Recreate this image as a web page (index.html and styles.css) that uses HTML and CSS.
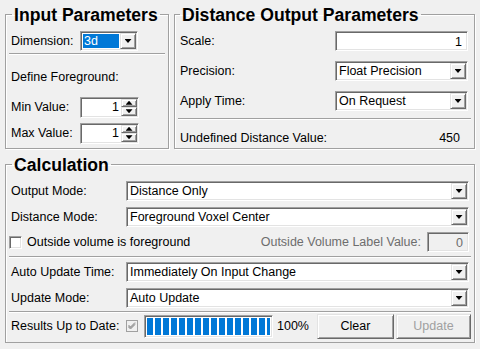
FILE: index.html
```html
<!DOCTYPE html>
<html lang="en">
<head>
  <meta charset="UTF-8">
  <title>Distance Transform</title>
  <link rel="stylesheet" href="styles.css">
</head>
<body>
  <div class="panel">
    <div class="top-row">
      <fieldset class="group input-group">
        <legend>Input Parameters</legend>
        <div class="row first">
          <span class="label short">Dimension:</span>
          <div class="combo narrow"><span class="combo-text"><span class="selected">3d</span></span><span class="drop"></span></div>
        </div>
        <div class="sep sep-dim"></div>
        <div class="row define">Define Foreground:</div>
        <div class="row min-row">
          <span class="label short">Min Value:</span>
          <div class="spin"><span class="spin-value">1</span><span class="spin-btns"><span class="spin-btn up"></span><span class="spin-btn down"></span></span></div>
        </div>
        <div class="row max-row">
          <span class="label short">Max Value:</span>
          <div class="spin"><span class="spin-value">1</span><span class="spin-btns"><span class="spin-btn up"></span><span class="spin-btn down"></span></span></div>
        </div>
      </fieldset>

      <fieldset class="group output-group">
        <legend>Distance Output Parameters</legend>
        <div class="row first">
          <span class="label grow">Scale:</span>
          <div class="edit wide-edit">1</div>
        </div>
        <div class="row spaced">
          <span class="label grow">Precision:</span>
          <div class="combo wide-edit"><span class="combo-text">Float Precision</span><span class="drop"></span></div>
        </div>
        <div class="row spaced">
          <span class="label grow">Apply Time:</span>
          <div class="combo wide-edit"><span class="combo-text">On Request</span><span class="drop"></span></div>
        </div>
        <div class="sep sep-out"></div>
        <div class="row undef">
          <span class="label grow">Undefined Distance Value:</span>
          <span class="value">450</span>
        </div>
      </fieldset>
    </div>

    <fieldset class="group calc-group">
      <legend>Calculation</legend>
      <div class="row first">
        <span class="label long">Output Mode:</span>
        <div class="combo grow"><span class="combo-text">Distance Only</span><span class="drop"></span></div>
      </div>
      <div class="row first">
        <span class="label long">Distance Mode:</span>
        <div class="combo grow"><span class="combo-text">Foreground Voxel Center</span><span class="drop"></span></div>
      </div>
      <div class="row check-row">
        <span class="checkbox"></span>
        <span class="label grow">Outside volume is foreground</span>
        <span class="label disabled">Outside Volume Label Value:</span>
        <div class="edit label-edit">0</div>
      </div>
      <div class="sep sep-a"></div>
      <div class="row auto-row">
        <span class="label long">Auto Update Time:</span>
        <div class="combo grow"><span class="combo-text">Immediately On Input Change</span><span class="drop"></span></div>
      </div>
      <div class="row first">
        <span class="label long">Update Mode:</span>
        <div class="combo grow"><span class="combo-text">Auto Update</span><span class="drop"></span></div>
      </div>
      <div class="sep sep-b"></div>
      <div class="row results-row">
        <span class="label long">Results Up to Date:</span>
        <span class="checkbox checked">
          <svg width="10" height="10" viewBox="0 0 10 10"><path d="M1.5 4 L3.5 6 L8 1.5 M1.5 5 L3.5 7 L8 2.5 M1.5 6 L3.5 8 L8 3.5" fill="none" stroke="#8c8c8c" stroke-width="1"/></svg>
        </span>
        <div class="progress"><div class="progress-fill"></div></div>
        <span class="percent">100%</span>
        <button class="btn">Clear</button>
        <button class="btn" disabled>Update</button>
      </div>
    </fieldset>
  </div>
</body>
</html>
```

FILE: styles.css
```css
body {
  margin: 0;
  background-color: #f0f0f0;
  font-family: "Liberation Sans", Arial, sans-serif;
  font-size: 12.5px;
  color: #000;
}
.panel {
  display: flex;
  flex-direction: column;
  gap: 4px;
  padding: 3px 5px 0 5px;
}
.top-row {
  display: flex;
  gap: 5px;
}
.group {
  margin: 0;
  padding: 0 5px;
  border: 1px solid #a0a0a0;
  box-shadow: 1px 1px 0 #fff, inset 1px 1px 0 #fff;
  min-width: 0;
  display: flex;
  flex-direction: column;
}
.group legend {
  font-size: 17.6px;
  font-weight: bold;
  line-height: 20px;
  padding: 2px 2px 0 2px;
  margin-left: 1px;
}
.input-group {
  box-sizing: border-box;
  width: 164px;
  flex: none;
}
.output-group {
  flex: 1;
}
.output-group legend {
  margin-left: 0;
}
.calc-group {
  padding-bottom: 3px;
}
.row {
  display: flex;
  align-items: center;
  height: 20px;
}
.first {
  margin-top: 6px;
}
.spaced {
  margin-top: 10px;
}
.label {
  white-space: nowrap;
}
.short {
  width: 69px;
}
.long {
  width: 115px;
  flex: none;
}
.grow {
  flex: 1;
}
.disabled {
  color: #6d6d6d;
  margin-right: 6px;
}
.define {
  margin-top: 12px;
}
.min-row {
  margin-top: 10px;
}
.max-row {
  margin-top: 6px;
}
.undef {
  margin-top: 7px;
  height: 21px;
}
.value {
  padding-right: 9px;
}
.sep {
  border-top: 1px solid #a0a0a0;
  border-bottom: 1px solid #fff;
  margin-left: -2px;
  margin-right: -2px;
}
.sep-dim {
  margin-top: 2px;
}
.sep-out {
  margin-top: 7px;
}
.sep-a {
  margin-top: 4px;
}
.sep-b {
  margin-top: 3px;
}
.check-row {
  margin-top: 5px;
}
.auto-row {
  margin-top: 4px;
}
.results-row {
  height: 26px;
  margin-right: -2px;
}

/* sunken boxes */
.edit, .combo, .spin, .progress, .checkbox {
  box-sizing: border-box;
  border: 1px solid;
  border-color: #a0a0a0 #fff #fff #a0a0a0;
  box-shadow: inset 1px 1px 0 #696969, inset -1px -1px 0 #e3e3e3;
  background-color: #fff;
}
.edit {
  height: 20px;
  text-align: right;
  padding: 3px 5px 0 0;
}
.wide-edit {
  width: 133px;
  margin-right: 1px;
}
.label-edit {
  width: 42px;
  color: #6d6d6d;
  background-color: #f0f0f0;
}
.combo {
  display: flex;
  height: 20px;
  padding: 1px;
}
.combo-text {
  flex: 1;
  padding-left: 2px;
  line-height: 16px;
  white-space: nowrap;
  overflow: hidden;
}
.narrow {
  width: 58px;
}
.narrow .combo-text {
  padding: 1px;
  line-height: 14px;
}
.selected {
  display: block;
  background-color: #0078d7;
  color: #fff;
  padding-left: 1px;
}
.drop, .spin-btn, .btn {
  box-sizing: border-box;
  border: 1px solid;
  border-color: #e3e3e3 #696969 #696969 #e3e3e3;
  box-shadow: inset 1px 1px 0 #fff, inset -1px -1px 0 #a0a0a0;
  background-color: #f0f0f0;
}
.drop {
  width: 16px;
  display: flex;
  align-items: center;
  justify-content: center;
}
.drop::after {
  content: "";
  width: 7px;
  height: 4px;
  background-color: #000;
  clip-path: polygon(0 0, 100% 0, 50% 100%);
}
.spin {
  display: flex;
  width: 59px;
  height: 21px;
  padding: 1px;
}
.spin-value {
  flex: 1;
  text-align: right;
  padding-right: 2px;
  line-height: 17px;
}
.spin-btns {
  display: flex;
  flex-direction: column;
  width: 16px;
}
.spin-btn {
  flex: 1;
  display: flex;
  align-items: center;
  justify-content: center;
}
.spin-btn::after {
  content: "";
  width: 7px;
  height: 4px;
  background-color: #000;
}
.up::after {
  clip-path: polygon(50% 0, 100% 100%, 0 100%);
}
.down::after {
  clip-path: polygon(0 0, 100% 0, 50% 100%);
}
.checkbox {
  width: 13px;
  height: 13px;
  flex: none;
}
.check-row .checkbox {
  margin-left: -2px;
  margin-right: 5px;
}
.checked {
  display: flex;
  align-items: center;
  justify-content: center;
  width: 12px;
  height: 12px;
  background-color: #f0f0f0;
  box-shadow: none;
  border-color: #a0a0a0;
  margin-right: 6px;
}
.progress {
  width: 129px;
  height: 23px;
  padding: 2px;
  background-color: #fff;
}
.progress-fill {
  height: 100%;
  background: repeating-linear-gradient(90deg, #0078d7 0 6px, transparent 6px 8px);
}
.percent {
  margin-left: 4px;
  flex: 1;
}
.btn {
  font-family: inherit;
  font-size: 12.5px;
  height: 25px;
  padding: 0;
  color: #000;
}
.btn:first-of-type {
  width: 77px;
  margin-right: 2px;
}
.btn:disabled {
  width: 75px;
  color: #a0a0a0;
}
```
